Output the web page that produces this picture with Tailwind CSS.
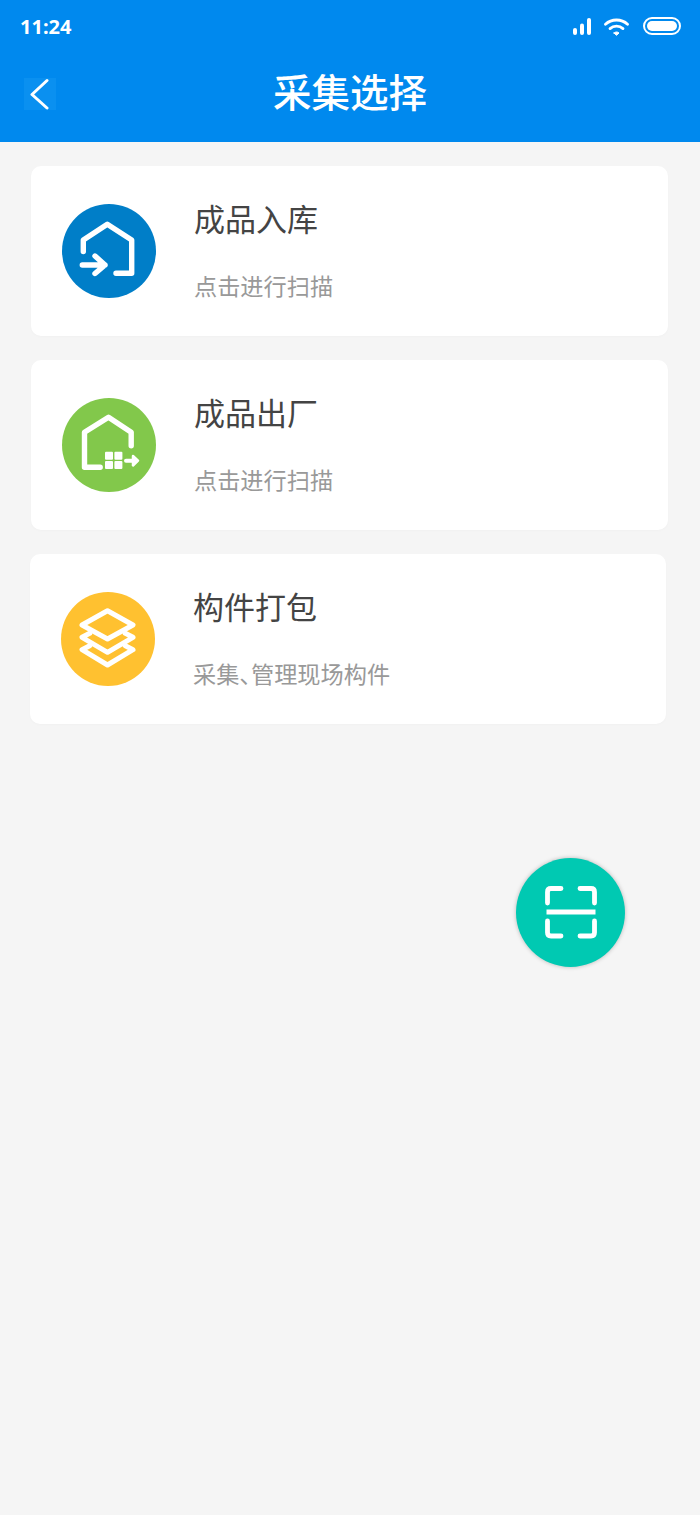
<!DOCTYPE html>
<html>

<head>
    <meta charset='UTF-8'>
    <meta name='viewport' content='width=device-width, initial-scale=1.0'>
    <title>采集选择</title>
    <script src="https://cdn.jsdelivr.net/npm/@tailwindcss/browser@4"></script>
</head>

<body class='bg-[#f5f5f5] font-["Noto_Sans_CJK_SC","Noto_Sans",sans-serif]'>
    <div class='relative w-[700px] h-[1515px] overflow-hidden'>

        <!-- header -->
        <div class='bg-[#0089ee] h-[142px] text-white'>
            <div class='h-[54px] flex items-center justify-between pl-[20px] pr-[19px]'>
                <span class='text-[20px] font-bold font-["Noto_Sans",sans-serif] leading-none'>11:24</span>
                <div class='flex items-center gap-[13px]'>
                    <svg width='18' height='18' viewBox='0 0 18 18' fill='white'>
                        <rect x='0' y='10' width='4' height='7' rx='2' />
                        <rect x='7' y='5.5' width='4' height='11.5' rx='2' />
                        <rect x='14' y='0' width='4' height='17' rx='2' />
                    </svg>
                    <svg width='25' height='18' viewBox='0 0 25 18' fill='none' stroke='white' stroke-width='2.8' stroke-linecap='round'>
                        <path d='M1.5 6.2 C7.5 0.6 17.5 0.6 23.5 6.2' />
                        <path d='M6 10.6 C9.6 7.4 15.4 7.4 19 10.6' />
                        <path d='M10 15 L12.5 17.3 L15 15 C13.5 13.6 11.5 13.6 10 15 Z' fill='white' stroke-width='1' />
                    </svg>
                    <div class='w-[38px] h-[18px] rounded-full border-2 border-white p-[2px] ml-[1px] mb-[2px]'>
                        <div class='w-full h-full rounded-full bg-white'></div>
                    </div>
                </div>
            </div>
            <div class='relative flex items-center justify-center h-[78px] pb-[6px]'>
                <div class='absolute left-[24px] top-[24px] w-[32px] h-[32px] bg-[#0a90f0] flex items-center justify-center'>
                    <svg width='32' height='32' viewBox='0 0 32 32' fill='none' stroke='white' stroke-width='3' stroke-linecap='round' stroke-linejoin='round'>
                        <path d='M23 2.5 L8 16.5 L23 30' />
                    </svg>
                </div>
                <h1 class='text-[38.5px] font-medium leading-none'>采集选择</h1>
            </div>
        </div>

        <!-- cards -->
        <div class='flex flex-col gap-[24px] pt-[24px]'>

            <div class='ml-[31px] w-[637px] h-[170px] bg-white rounded-[10px] shadow-[0_1px_3px_rgba(0,0,0,0.02)] flex items-center pl-[31px] gap-[38px]'>
                <div class='w-[94px] h-[94px] rounded-full bg-[#007ec8] shrink-0'>
                    <svg width='94' height='94' viewBox='0 0 94 94' fill='none' stroke='white' stroke-width='5.4' stroke-linecap='round' stroke-linejoin='round'>
                        <path d='M21.3 47.5 L21.3 36 L45.3 20.3 L69.7 36 L69.7 69.3 L54 69.3' />
                        <path d='M20.3 61 L43 61 M33 52 L43 61 L33 69.5' />
                    </svg>
                </div>
                <div class='flex flex-col mb-[5px]'>
                    <span class='text-[31px] leading-[40px] text-[#444444]'>成品入库</span>
                    <span class='text-[23.2px] leading-[30px] text-[#999999] mt-[32px]'>点击进行扫描</span>
                </div>
            </div>

            <div class='ml-[31px] w-[637px] h-[170px] bg-white rounded-[10px] shadow-[0_1px_3px_rgba(0,0,0,0.02)] flex items-center pl-[31px] gap-[38px]'>
                <div class='w-[94px] h-[94px] rounded-full bg-[#82c84b] shrink-0'>
                    <svg width='94' height='94' viewBox='0 0 94 94' fill='none' stroke='white' stroke-width='5.4' stroke-linecap='round' stroke-linejoin='round'>
                        <path d='M69.2 47.7 L69.2 34.3 L46.5 19.3 L22.5 34.3 L22.5 69.3 L38.2 69.3' />
                        <rect x='43' y='53.7' width='8' height='8' rx='1' fill='white' stroke='none' />
                        <rect x='52.4' y='53.7' width='8' height='8' rx='1' fill='white' stroke='none' />
                        <rect x='43' y='63' width='8' height='8' rx='1' fill='white' stroke='none' />
                        <rect x='52.4' y='63' width='8' height='8' rx='1' fill='white' stroke='none' />
                        <path d='M64 62.7 L74 62.7' stroke-width='4' />
                        <path d='M71 58 L76 62.7 L71 67.5 Z' fill='white' stroke-width='2.5' />
                    </svg>
                </div>
                <div class='flex flex-col mb-[5px]'>
                    <span class='text-[31px] leading-[40px] text-[#444444]'>成品出厂</span>
                    <span class='text-[23.2px] leading-[30px] text-[#999999] mt-[32px]'>点击进行扫描</span>
                </div>
            </div>

            <div class='ml-[30px] w-[636px] h-[170px] bg-white rounded-[10px] shadow-[0_1px_3px_rgba(0,0,0,0.02)] flex items-center pl-[31px] gap-[38px]'>
                <div class='w-[94px] h-[94px] rounded-full bg-[#ffc130] shrink-0'>
                    <svg width='94' height='94' viewBox='0 0 94 94' fill='none' stroke='white' stroke-width='5' stroke-linecap='round' stroke-linejoin='round'>
                        <path d='M46.5 18.7 L72 33 L46.5 47 L21 33 Z' />
                        <path d='M28.7 41.3 L21 45.3 L46.5 60.3 L72 45.3 L64.3 41.3' />
                        <path d='M28.7 53.7 L21 57.7 L46.5 73 L72 57.7 L64.3 53.7' />
                    </svg>
                </div>
                <div class='flex flex-col mb-[5px]'>
                    <span class='text-[31px] leading-[40px] text-[#444444]'>构件打包</span>
                    <span class='text-[23.2px] leading-[30px] text-[#999999] mt-[32px] [font-feature-settings:"halt"]'>采集、管理现场构件</span>
                </div>
            </div>

        </div>

        <!-- scan button -->
        <div class='absolute left-[516px] top-[858px] w-[109px] h-[109px] rounded-full bg-[#00c9b2] shadow-[0_0_4px_rgba(0,0,0,0.25)]'>
            <svg width='109' height='109' viewBox='0 0 109 109' fill='none' stroke='white' stroke-width='4.8' stroke-linecap='round' stroke-linejoin='round'>
                <path d='M45 30.5 L35 30.5 Q31.5 30.5 31.5 34 L31.5 45' />
                <path d='M64 30.5 L75 30.5 Q78.5 30.5 78.5 34 L78.5 45' />
                <path d='M45 78 L35 78 Q31.5 78 31.5 74.5 L31.5 63' />
                <path d='M64 78 L75 78 Q78.5 78 78.5 74.5 L78.5 63' />
                <path d='M30.5 54 L79.5 54' stroke-linecap='butt' />
            </svg>
        </div>

    </div>
</body>

</html>
